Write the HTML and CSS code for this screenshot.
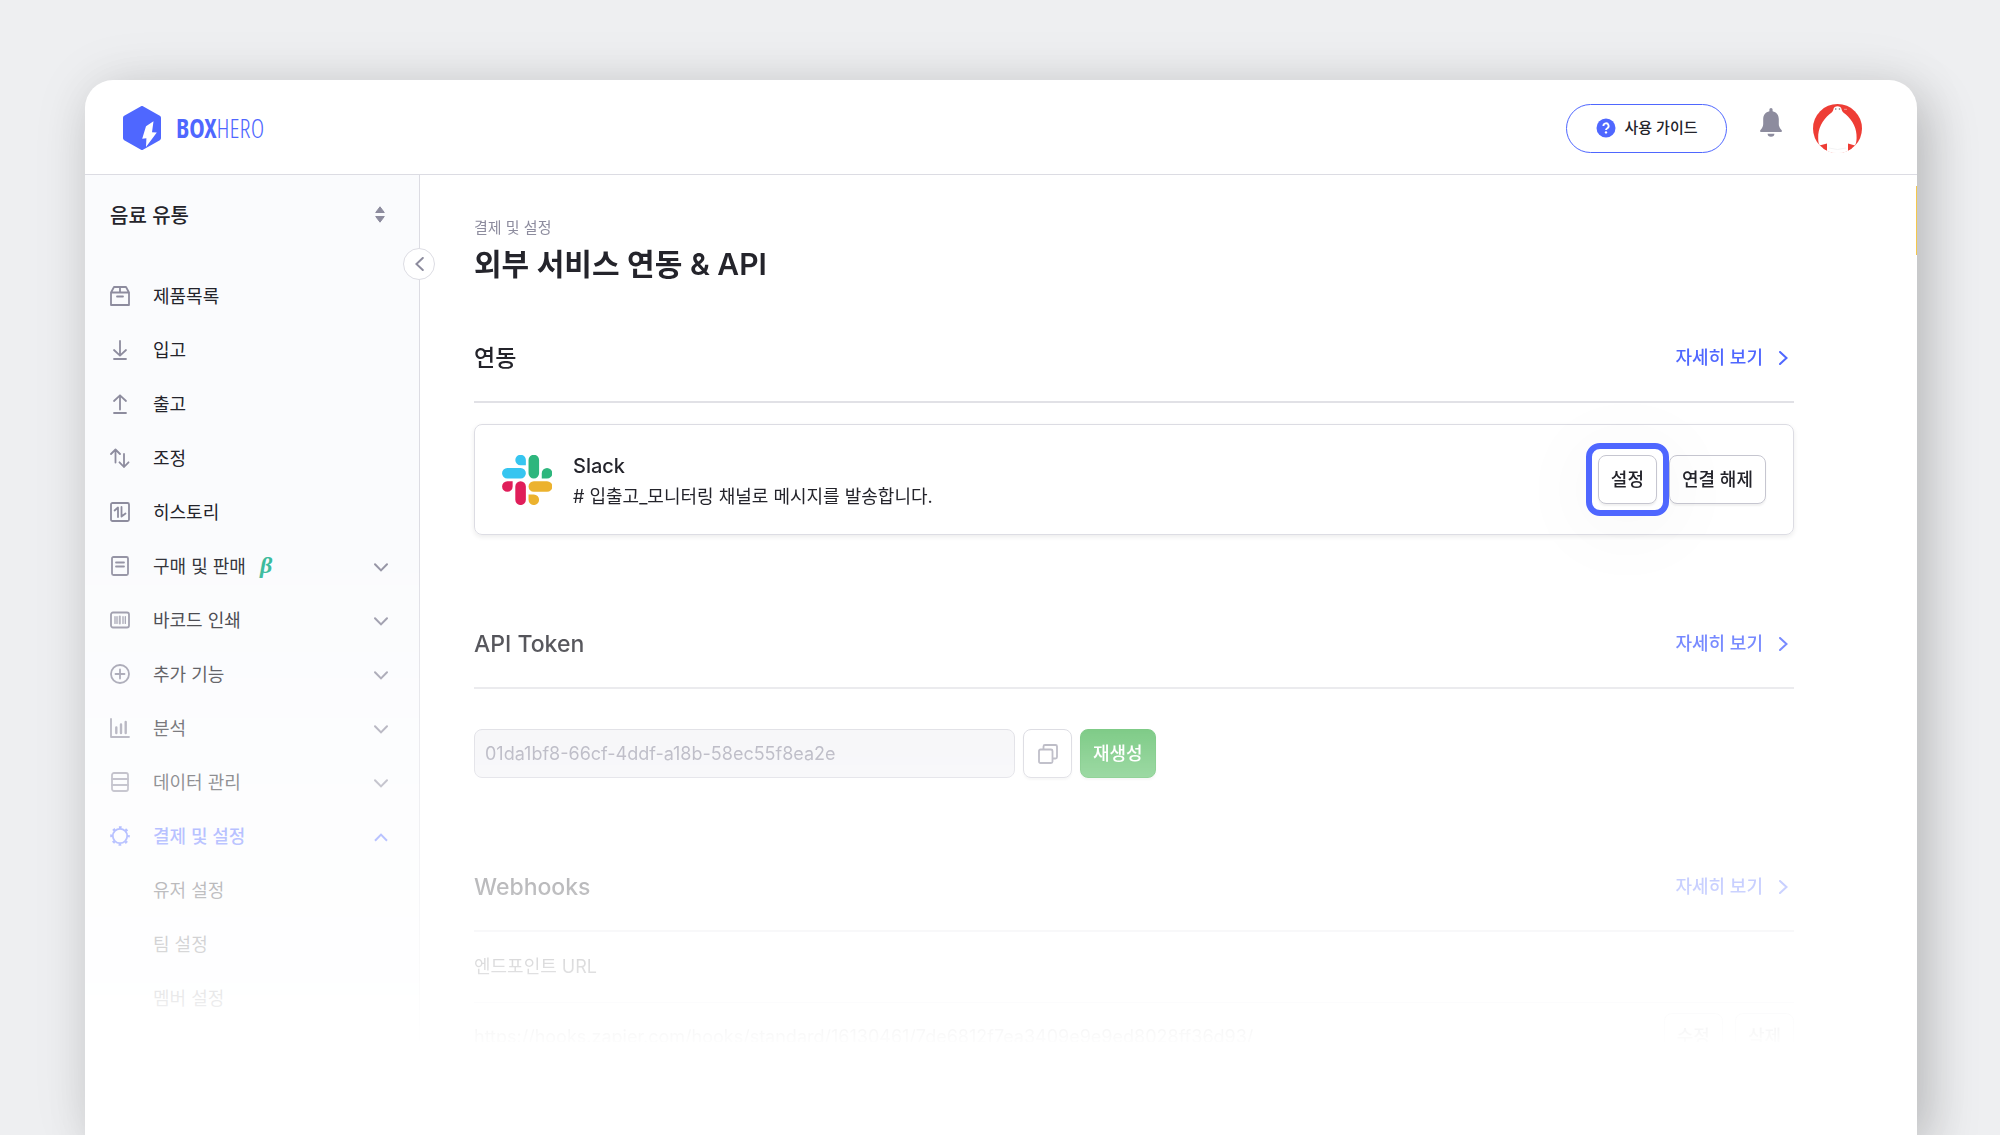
FILE: index.html
```html
<!DOCTYPE html>
<html lang="ko">
<head>
<meta charset="utf-8">
<meta name="viewport" content="width=device-width, initial-scale=1">
<title>외부 서비스 연동 &amp; API – BoxHero</title>
<link rel="stylesheet" href="styles.css">
</head>
<body>
<svg class="sprite" aria-hidden="true">
  <symbol id="chev-down" viewBox="0 0 14 9"><path d="M1 1.2 7 7.4 13 1.2"/></symbol>
  <symbol id="chev-up" viewBox="0 0 14 9"><path d="M1 7.8 7 1.6 13 7.8"/></symbol>
  <symbol id="chev-right" viewBox="0 0 9 14"><path d="M1 1 7.5 7 1 13"/></symbol>
</svg>
<div class="window">
  <header class="topbar">
    <a class="brand" href="#">
      <svg class="brand-mark" viewBox="0 0 38 44" aria-hidden="true">
        <path fill="#4f67ff" d="M17.6.4a2.6 2.6 0 0 1 2.8 0l16.4 9.4A2.4 2.4 0 0 1 38 12v20a2.4 2.4 0 0 1-1.2 2.2L20.4 43.600a2.600 2.600 0 0 1-2.800 0L1.200 34.200A2.400 2.400 0 0 1 0 32V12a2.400 2.400 0 0 1 1.200-2.200z"/>
        <path fill="#fff" d="M30.500 15.200 23 20.200 19.200 32.800 23.400 32.200 23 41 33.800 26.400 29 26.200z"/>
      </svg>
      <span class="brand-name"><b>BOX</b>HERO</span>
    </a>
    <div class="tools">
      <button class="guide" type="button">
        <svg class="guide-icon" viewBox="0 0 20 20" aria-hidden="true"><circle cx="10" cy="10" r="9.500" fill="#4f67ff"/><path d="M7.400 8a2.600 2.600 0 1 1 3.900 2.200c-.9.5-1.300 1-1.300 1.800" fill="none" stroke="#fff" stroke-width="1.900"/><circle cx="10" cy="14.400" r="1.200" fill="#fff"/></svg>
        사용 가이드
      </button>
      <button class="plain bell" type="button" aria-label="알림">
        <svg viewBox="0 0 22 29" width="22" height="29" aria-hidden="true"><path fill="#8d8c9e" d="M11 0a1.600 1.600 0 0 1 1.600 1.600v1.600c3.900.8 6.200 3.900 6.200 7.800v5c0 2.600 1.200 4.200 2.700 6 .8 1 .4 2-.8 2H1.300c-1.200 0-1.600-1-.8-2 1.500-1.800 2.700-3.400 2.700-6v-5c0-3.900 2.300-7 6.200-7.800V1.600A1.600 1.600 0 0 1 11 0zM7.600 25.800h6.800a3.400 3 0 0 1-6.800 0z"/></svg>
      </button>
      <button class="plain" type="button" aria-label="내 계정">
        <svg class="avatar" viewBox="0 0 49 49" aria-hidden="true">
          <defs><clipPath id="face"><circle cx="24.500" cy="24.500" r="24.500"/></clipPath></defs>
          <g clip-path="url(#face)">
            <rect width="49" height="49" fill="#ee3d35"/>
            <path fill="#fff" d="M20.400 5.500c.4-4.200 7.800-4.200 8.200 0 .4 2 1.700 3 3.700 4.600C40 16.500 44 25 43.600 34c-.1 3-.6 5.500-1.600 7.500l-7-2V49H14v-9.500l-7.500 2C5.600 39.500 5.200 37 5.200 34 5 25 9 16.500 16.700 10.100c2-1.600 3.300-2.600 3.700-4.600z"/>
            <path fill="#ee3d35" d="M8 45l6-5v8l-4 1zM35 40l6 5-4 3-2 0z"/>
            <path fill="#fff" d="M0 46.500h49V49H0z"/>
            <circle cx="22.700" cy="5" r=".8" fill="#777"/><circle cx="26.500" cy="5" r=".8" fill="#777"/>
            <path stroke="#f6938d" d="M31 5.300h3"/>
            <path fill="none" stroke="#f3f3f4" d="M16 44q8.500 3 17 0"/>
          </g>
        </svg>
      </button>
    </div>
  </header>

  <div class="workspace">
    <nav class="sidebar" aria-label="메뉴">
      <button class="plain team" type="button">음료 유통
        <svg width="10" height="17" viewBox="0 0 10 17" aria-hidden="true"><path fill="#8d8c9e" stroke="#8d8c9e" stroke-linejoin="round" d="M5 .8 9.300 6.500H.7zM5 16.200 9.300 10.500H.7z"/></svg>
      </button>
      <button class="collapse" type="button" aria-label="메뉴 접기"><svg width="9" height="14" viewBox="0 0 9 14" aria-hidden="true"><path d="M7.800 1 1.400 7l6.400 6"/></svg></button>
      <ul class="menu">
        <li><a href="#"><svg class="ico" viewBox="0 0 20 20"><path d="M1 6.500h18V19H1zM1 6.500 4 1h12l3 5.500M10 1v5.500M7 10.500h6"/></svg>제품목록</a></li>
        <li><a href="#"><svg class="ico" viewBox="0 0 20 20"><path d="M10 1v14.500M4 10l6 5.700L16 10M4 19h12"/></svg>입고</a></li>
        <li><a href="#"><svg class="ico" viewBox="0 0 20 20"><path d="M10 15.500V1.300M4 7l6-5.700L16 7M4 19h12"/></svg>출고</a></li>
        <li><a href="#"><svg class="ico" viewBox="0 0 20 20"><path d="M5.500 14.500V1.500M1 6l4.500-4.500L10 6M14 6v13M9.500 14.300 14 19l4.500-4.700"/></svg>조정</a></li>
        <li><a href="#"><svg class="ico" viewBox="0 0 20 20"><rect x="1" y="1" width="18" height="18" rx="1.500"/><path d="M4.600 8.500 8 5.500V15M11.500 5v9.500l4-3"/></svg>히스토리</a></li>
        <li><a href="#"><svg class="ico" viewBox="0 0 20 20"><rect x="2" y="1" width="16" height="18" rx="1.500"/><path d="M6 6.500h8M6 10.500h8"/></svg>구매 및 판매<i class="beta">β</i><svg class="chev"><use href="#chev-down"/></svg></a></li>
        <li><a href="#"><svg class="ico" viewBox="0 0 20 20"><rect x="1" y="2.500" width="18" height="15" rx="2"/><path stroke-width="1.200" d="M5 6.500v7M7 6.500v7M13 6.500v7M15.300 6.500v7"/><path stroke-width="2" d="M9.800 6.500v7" opacity=".8"/></svg>바코드 인쇄<svg class="chev"><use href="#chev-down"/></svg></a></li>
        <li><a href="#"><svg class="ico" viewBox="0 0 20 20"><circle cx="10" cy="10" r="9"/><path d="M10 5.500v9M5.500 10h9"/></svg>추가 기능<svg class="chev"><use href="#chev-down"/></svg></a></li>
        <li><a href="#"><svg class="ico" viewBox="0 0 20 20"><path d="M1 1v18h18"/><path stroke-width="2.400" d="M6.300 9.500V15M11 6.500V15M15.700 4v11"/></svg>분석<svg class="chev"><use href="#chev-down"/></svg></a></li>
        <li><a href="#"><svg class="ico" viewBox="0 0 20 20"><rect x="2" y="1" width="16" height="18" rx="2"/><path d="M2 7h16M2 13h16"/></svg>데이터 관리<svg class="chev"><use href="#chev-down"/></svg></a></li>
        <li><a class="active" href="#" aria-expanded="true"><svg class="ico" viewBox="0 0 20 20"><circle cx="10" cy="10" r="7.200"/><circle cx="10" cy="10" r="8.600" stroke-width="2.400" stroke-dasharray="2.700 4.054" stroke-dashoffset="1.350"/></svg>결제 및 설정<svg class="chev"><use href="#chev-up"/></svg></a>
          <ul class="submenu">
            <li><a href="#">유저 설정</a></li>
            <li><a href="#">팀 설정</a></li>
            <li><a href="#">멤버 설정</a></li>
          </ul>
        </li>
      </ul>
    </nav>

    <main class="content">
      <p class="crumb">결제 및 설정</p>
      <h1>외부 서비스 연동 &amp; API</h1>

      <section>
        <div class="section-head">
          <h2>연동</h2>
          <a class="more" href="#">자세히 보기<svg class="chev-r"><use href="#chev-right"/></svg></a>
        </div>
        <div class="card">
          <svg class="slack" viewBox="0 0 124 124" aria-hidden="true">
            <path fill="#e01e5a" d="M26.400 78.200a13.100 13.100 0 1 1-13.100-13.100h13.100zM33 78.200a13.100 13.100 0 0 1 26.200 0V111A13.100 13.100 0 0 1 33 111z"/>
            <path fill="#36c5f0" d="M46.100 25.600a13.100 13.100 0 1 1 13.100-13.100v13.100zM46.100 32.300a13.100 13.100 0 0 1 0 26.200H13.200a13.100 13.100 0 0 1 0-26.200z"/>
            <path fill="#2eb67d" d="M98.600 45.400a13.100 13.100 0 1 1 13.100 13.100H98.600zM92 45.400a13.100 13.100 0 0 1-26.200 0V12.500a13.100 13.100 0 0 1 26.200 0z"/>
            <path fill="#ecb22e" d="M78.900 97.900A13.100 13.100 0 1 1 65.800 111V97.900zM78.900 91.300a13.100 13.100 0 0 1 0-26.200h32.900a13.100 13.100 0 0 1 0 26.200z"/>
          </svg>
          <div class="card-text">
            <h3>Slack</h3>
            <p># 입출고_모니터링 채널로 메시지를 발송합니다.</p>
          </div>
          <div class="actions">
            <button class="btn focus" type="button">설정</button>
            <button class="btn" type="button">연결 해제</button>
          </div>
        </div>
      </section>

      <section>
        <div class="section-head">
          <h2>API Token</h2>
          <a class="more" href="#">자세히 보기<svg class="chev-r"><use href="#chev-right"/></svg></a>
        </div>
        <div class="token">
          <input type="text" aria-label="API Token" value="01da1bf8-66cf-4ddf-a18b-58ec55f8ea2e" disabled>
          <button class="btn copy" type="button" aria-label="복사"><svg width="20" height="20" viewBox="0 0 20 20" aria-hidden="true"><rect x="1" y="5.500" width="13.500" height="13.500" rx="1.500"/><path d="M5.500 5.500V2.500A1.500 1.500 0 0 1 7 1h10.500A1.500 1.500 0 0 1 19 2.500V13a1.500 1.500 0 0 1-1.500 1.500h-3"/></svg></button>
          <button class="btn primary" type="button">재생성</button>
        </div>
      </section>

      <section>
        <div class="section-head">
          <h2>Webhooks</h2>
          <a class="more" href="#">자세히 보기<svg class="chev-r"><use href="#chev-right"/></svg></a>
        </div>
        <table class="hooks">
          <thead><tr><th scope="col" colspan="2">엔드포인트 URL</th></tr></thead>
          <tbody><tr>
            <td>https://hooks.zapier.com/hooks/standard/16130461/7de6812f7ea3409e9e9ed8028ff36d93/</td>
            <td><div class="actions"><button class="btn" type="button">수정</button><button class="btn" type="button">삭제</button></div></td>
          </tr></tbody>
        </table>
      </section>
    </main>
  </div>
  <div class="notice"></div>
</div>
</body>
</html>
```
FILE: styles.css
```css
*, *::before, *::after { box-sizing: border-box; }

body {
  margin: 0;
  min-height: 100vh;
  display: flex;
  padding: 80px 83px 0 85px;
  overflow: hidden;
  background: #eeeff1;
  color: #24242b;
  font: 400 18px/26px Inter, "Noto Sans CJK KR", sans-serif;
}

h1, h2, h3, p, ul { margin: 0; padding: 0; font-weight: 500; }
ul { list-style: none; font-weight: 400; }
a { color: inherit; text-decoration: none; }
button, input { font: inherit; color: inherit; }
.sprite { position: absolute; width: 0; height: 0; }
svg { flex: none; display: block; }

.plain { padding: 0; border: 0; background: none; }

.window {
  position: relative;
  flex: 1;
  min-width: 0;
  height: calc(100vh - 80px);
  border-radius: 28px 28px 0 0;
  background: #fff;
  box-shadow: 14px 16px 50px rgba(0, 0, 0, .18), 0 0 60px rgba(0, 0, 0, .08);
}

/* top bar */
.topbar {
  display: flex;
  align-items: center;
  justify-content: space-between;
  height: 95px;
  padding: 2px 55px 0 38px;
  border-bottom: 1px solid #dcdce3;
}
.brand { display: flex; align-items: center; gap: 15px; color: #4f67ff; }
.brand-mark { width: 38px; height: 44px; }
.brand-name { font: 300 26px/26px "Open Sans Condensed Light", "Noto Sans ExtraCondensed Light", "Noto Sans ExtraCondensed", sans-serif; }
.brand-name b { font-family: "Open Sans Condensed", sans-serif; font-weight: 700; }
.tools { display: flex; align-items: center; }
.guide {
  display: flex;
  align-items: center;
  justify-content: center;
  gap: 9px;
  width: 161px;
  height: 49px;
  padding: 0;
  border: 1px solid #4f67ff;
  border-radius: 25px;
  background: #fff;
  font-size: 15px;
  font-weight: 500;
}
.guide-icon { width: 20px; height: 20px; }
.bell { margin: 0 31px 12px 33px; }
.avatar { width: 49px; height: 49px; }

/* workspace fades out towards the bottom */
.workspace {
  display: flex;
  height: 867px;
  overflow: hidden;
  mask-image: linear-gradient(#000 345px, rgba(0, 0, 0, .01));
}

.sidebar {
  position: relative;
  flex: none;
  width: 335px;
  padding-top: 28px;
  border-right: 1px solid #dcdce3;
  background: #fafbfd;
}
.team {
  display: flex;
  align-items: center;
  justify-content: space-between;
  width: 100%;
  padding: 0 34px 0 25px;
  font-size: 20px;
  font-weight: 500;
}
.team svg { margin-bottom: 4px; }
.collapse {
  position: absolute;
  top: 73px;
  right: -16px;
  display: grid;
  place-items: center;
  width: 32px;
  height: 32px;
  padding: 0;
  border: 1px solid #dcdce3;
  border-radius: 50%;
  background: #fff;
}
.collapse path, .chev, .chev-r { fill: none; stroke: #8d8c9e; stroke-width: 2; stroke-linecap: round; }
.menu { margin-top: 41px; }
.menu a { display: flex; align-items: center; height: 54px; padding: 0 31px 0 25px; }
.ico { width: 20px; height: 20px; margin: 0 23px 2px 0; fill: none; stroke: #8d8c9e; stroke-width: 1.8; stroke-linejoin: round; stroke-linecap: round; }
.chev { width: 14px; height: 9px; margin-left: auto; }
.beta { margin-left: 14px; padding-bottom: 4px; color: #2bb594; font: italic 700 24px/26px "Liberation Serif", serif; }
.menu .active { color: #4f67ff; font-weight: 500; }
.active .ico, .active .chev { stroke: #4f67ff; stroke-linecap: butt; }
.menu .submenu a { padding-left: 68px; }

/* content */
.content { flex: 1; min-width: 0; padding: 40px 123px 0 54px; }
.crumb { color: #8d8c9e; font-size: 15px; font-weight: 400; }
h1 { margin-top: 1px; font-size: 30px; line-height: 44px; font-weight: 600; }
h2 { font-size: 23px; line-height: 32px; }
section { margin-top: 56px; }
section + section { margin-top: 93px; }
.section-head {
  display: flex;
  align-items: center;
  justify-content: space-between;
  padding-bottom: 27px;
  border-bottom: 2px solid #e1e1e6;
}
.more { display: flex; align-items: center; gap: 16px; padding-right: 6px; color: #4f67ff; font-weight: 500; }
.chev-r { width: 9px; height: 14px; stroke: #4f67ff; }

.card {
  display: flex;
  align-items: center;
  margin-top: 21px;
  height: 111px;
  padding: 0 27px;
  border: 1px solid #dcdce3;
  border-radius: 8px;
  box-shadow: 0 2px 5px rgba(0, 0, 0, .08);
}
.slack { width: 50px; height: 50px; margin-right: 21px; }
.card-text { flex: 1; min-width: 0; padding-top: 5px; }
h3 { font-size: 20px; line-height: 30px; }
.card-text p { font-weight: 400; line-height: 32px; }
.actions { display: flex; gap: 12px; justify-content: flex-end; }
.btn {
  height: 49px;
  padding: 0 12px;
  border: 1px solid #c6c6d0;
  border-radius: 8px;
  background: #fff;
  box-shadow: 0 2px 2px rgba(0, 0, 0, .06);
  font-weight: 500;
  white-space: nowrap;
}
/* highlight frame around the settings button */
.focus { position: relative; }
.focus::after {
  content: "";
  position: absolute;
  inset: -13px;
  border: 6px solid #4f67ff;
  border-radius: 14px;
  box-shadow: 0 10px 80px 10px rgba(0, 0, 0, .03);
  pointer-events: none;
}

.token { display: flex; gap: 8px; margin-top: 40px; }
.token input {
  flex: 0 1 541px;
  min-width: 0;
  height: 49px;
  padding: 0 10px;
  border: 1px solid #cfcfd8;
  border-radius: 8px;
  background: #f1f1f5;
  color: #8d8c9e;
}
.copy { width: 49px; padding: 0 14px; }
.copy svg { fill: none; stroke: #8d8c9e; stroke-width: 1.8; }
.token .primary { border-color: #2ba939; background: linear-gradient(#2ba939, #3eb54c); color: #fff; }

.hooks { width: 100%; border-collapse: collapse; }
.hooks th, .hooks td { padding: 0; text-align: left; font-weight: 400; }
.hooks th { height: 70px; border-bottom: 1px solid #e1e1e6; }
.hooks td { padding-top: 10px; }

/* edge of a collapsed notice tab */
.notice { position: absolute; top: 106px; right: 0; width: 1px; height: 69px; background: #f5c84c; }
```
